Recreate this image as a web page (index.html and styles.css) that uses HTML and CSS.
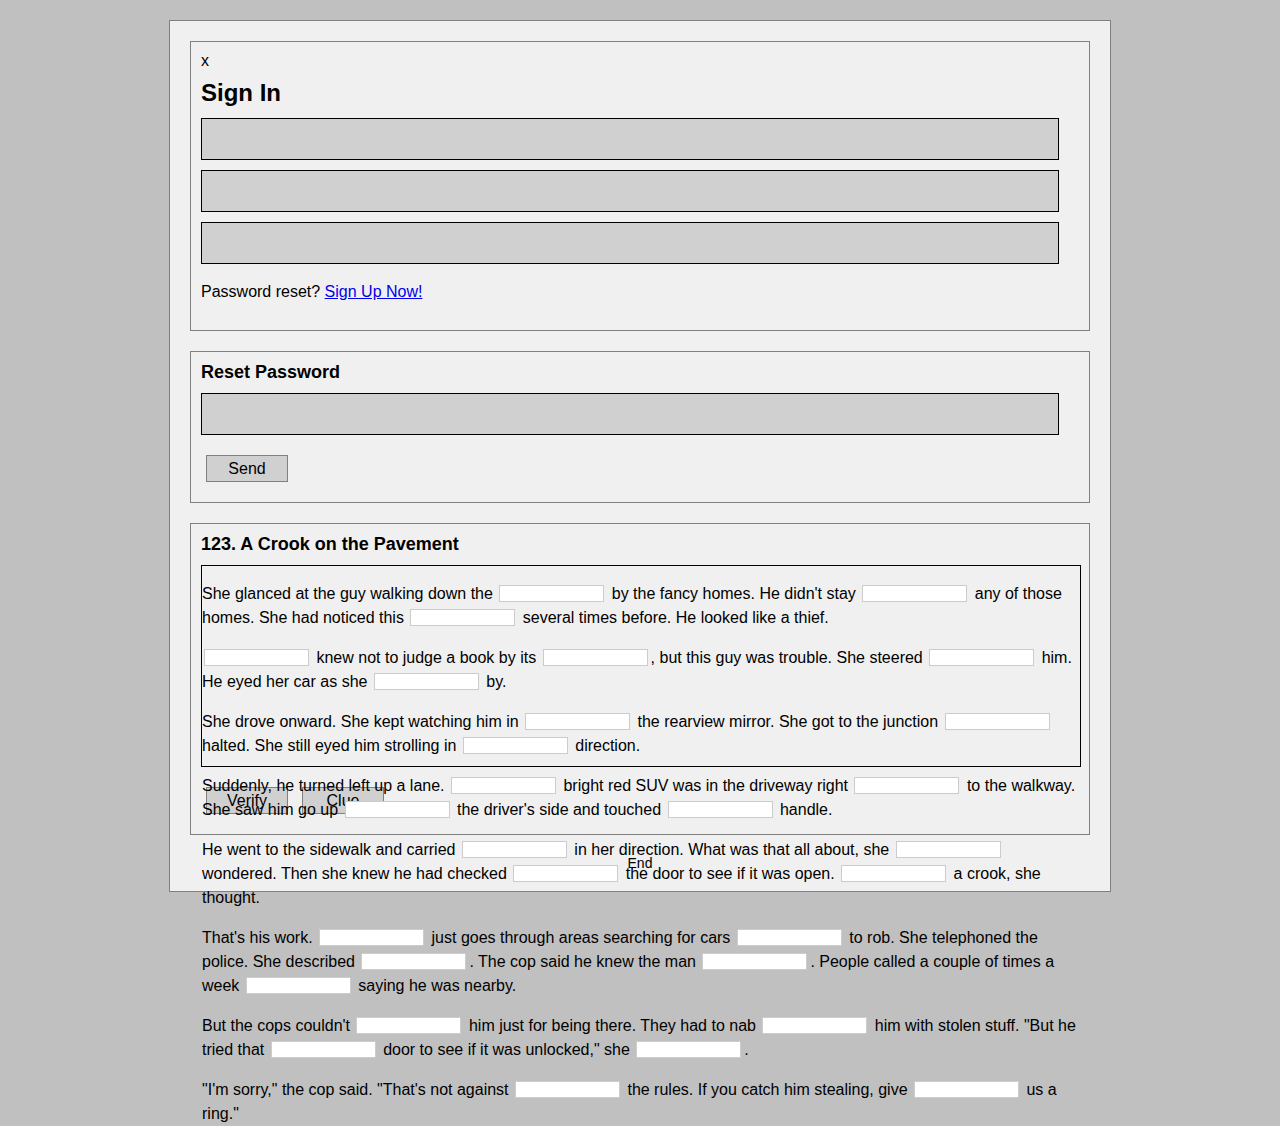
FILE: index.html
```html
<!DOCTYPE html>
<html lang="en">
<head>
<meta charset="utf-8">
<title>A Crook on the Pavement</title>
<link rel="stylesheet" href="styles.css">
</head>
<body>
<div class="wrap">
  <section class="panel">
    <div class="close">x</div>
    <h2 class="signin-title">Sign In</h2>
    <input class="field" type="text">
    <input class="field" type="password">
    <input class="field field-last" type="text">
    <p class="reset-line">Password reset? <a href="#">Sign Up Now!</a></p>
  </section>

  <section class="panel">
    <h3 class="panel-title">Reset Password</h3>
    <input class="field field-last" type="text">
    <div class="btn-row"><button class="btn">Send</button></div>
  </section>

  <section class="panel">
    <h3 class="panel-title">123. A Crook on the Pavement</h3>
    <div class="story">
      <p>She glanced at the guy walking down the <input class="blank"> by the fancy homes. He didn't stay <input class="blank"> any of those homes. She had noticed this <input class="blank"> several times before. He looked like a thief.</p>
      <p><input class="blank"> knew not to judge a book by its <input class="blank">, but this guy was trouble. She steered <input class="blank"> him. He eyed her car as she <input class="blank"> by.</p>
      <p>She drove onward. She kept watching him in <input class="blank"> the rearview mirror. She got to the junction <input class="blank"> halted. She still eyed him strolling in <input class="blank"> direction.</p>
      <p>Suddenly, he turned left up a lane. <input class="blank"> bright red SUV was in the driveway right <input class="blank"> to the walkway. She saw him go up <input class="blank"> the driver's side and touched <input class="blank"> handle.</p>
      <p>He went to the sidewalk and carried <input class="blank"> in her direction. What was that all about, she <input class="blank"> wondered. Then she knew he had checked <input class="blank"> the door to see if it was open. <input class="blank"> a crook, she thought.</p>
      <p>That's his work. <input class="blank"> just goes through areas searching for cars <input class="blank"> to rob. She telephoned the police. She described <input class="blank">. The cop said he knew the man <input class="blank">. People called a couple of times a week <input class="blank"> saying he was nearby.</p>
      <p>But the cops couldn't <input class="blank"> him just for being there. They had to nab <input class="blank"> him with stolen stuff. "But he tried that <input class="blank"> door to see if it was unlocked," she <input class="blank">.</p>
      <p>"I'm sorry," the cop said. "That's not against <input class="blank"> the rules. If you catch him stealing, give <input class="blank"> us a ring."</p>
    </div>
    <div class="btn-row">
      <button class="btn">Verify</button>
      <button class="btn">Clue</button>
    </div>
  </section>

  <div class="end">End</div>
</div>
</body>
</html>
```

FILE: styles.css
```css
html, body {
  margin: 0;
  padding: 0;
}

body {
  min-height: 1126px;
  background: #c0c0c0;
  font-family: "Liberation Sans", Arial, sans-serif;
  font-size: 16px;
  color: #000;
}

.wrap {
  box-sizing: border-box;
  width: 942px;
  height: 872px;
  margin: 20px auto 0;
  padding: 20px;
  background: #f0f0f0;
  border: 1px solid #808080;
}

.panel {
  display: flow-root;
  border: 1px solid #808080;
  padding: 10px;
  margin: 0 0 20px;
}

.close {
  line-height: 18px;
}

.signin-title {
  margin: 9px 0 11px;
  font-size: 24px;
  line-height: 28px;
  font-weight: bold;
}

.panel-title {
  margin: 0 0 10px;
  font-size: 18px;
  line-height: 21px;
  font-weight: bold;
}

.field {
  display: block;
  box-sizing: border-box;
  width: 858px;
  height: 42px;
  margin: 0 0 10px;
  padding: 0 6px;
  background: #d0d0d0;
  border: 1px solid #000;
  border-radius: 0;
  font: inherit;
  outline: none;
}

.field-last {
  margin-bottom: 0;
}

.reset-line {
  margin: 19px 0 19px;
  line-height: 18px;
}

.reset-line a {
  color: #0000ee;
  text-decoration: underline;
}

.btn-row {
  float: left;
  display: flex;
  gap: 14px;
  margin: 20px 0 10px;
  padding-left: 5px;
}

.btn {
  box-sizing: border-box;
  width: 82px;
  height: 27px;
  margin: 0;
  padding: 0;
  background: #d0d0d0;
  border: 1px solid #808080;
  border-radius: 0;
  font-family: "Liberation Sans", Arial, sans-serif;
  font-size: 16px;
  color: #000;
}

.story {
  width: 100%;
  height: 200px;
  border: 1px solid #000;
  padding: 0;
}

.story p {
  margin: 16px 0;
  line-height: 24px;
}

.blank {
  box-sizing: border-box;
  width: 105px;
  height: 17px;
  margin: 3px 3px 0 2px;
  padding: 0;
  vertical-align: top;
  background: #fff;
  border: 1px solid #cccccc;
  border-radius: 0;
  font: inherit;
  outline: none;
}

.end {
  text-align: center;
  font-size: 14px;
  line-height: 16px;
}
```
